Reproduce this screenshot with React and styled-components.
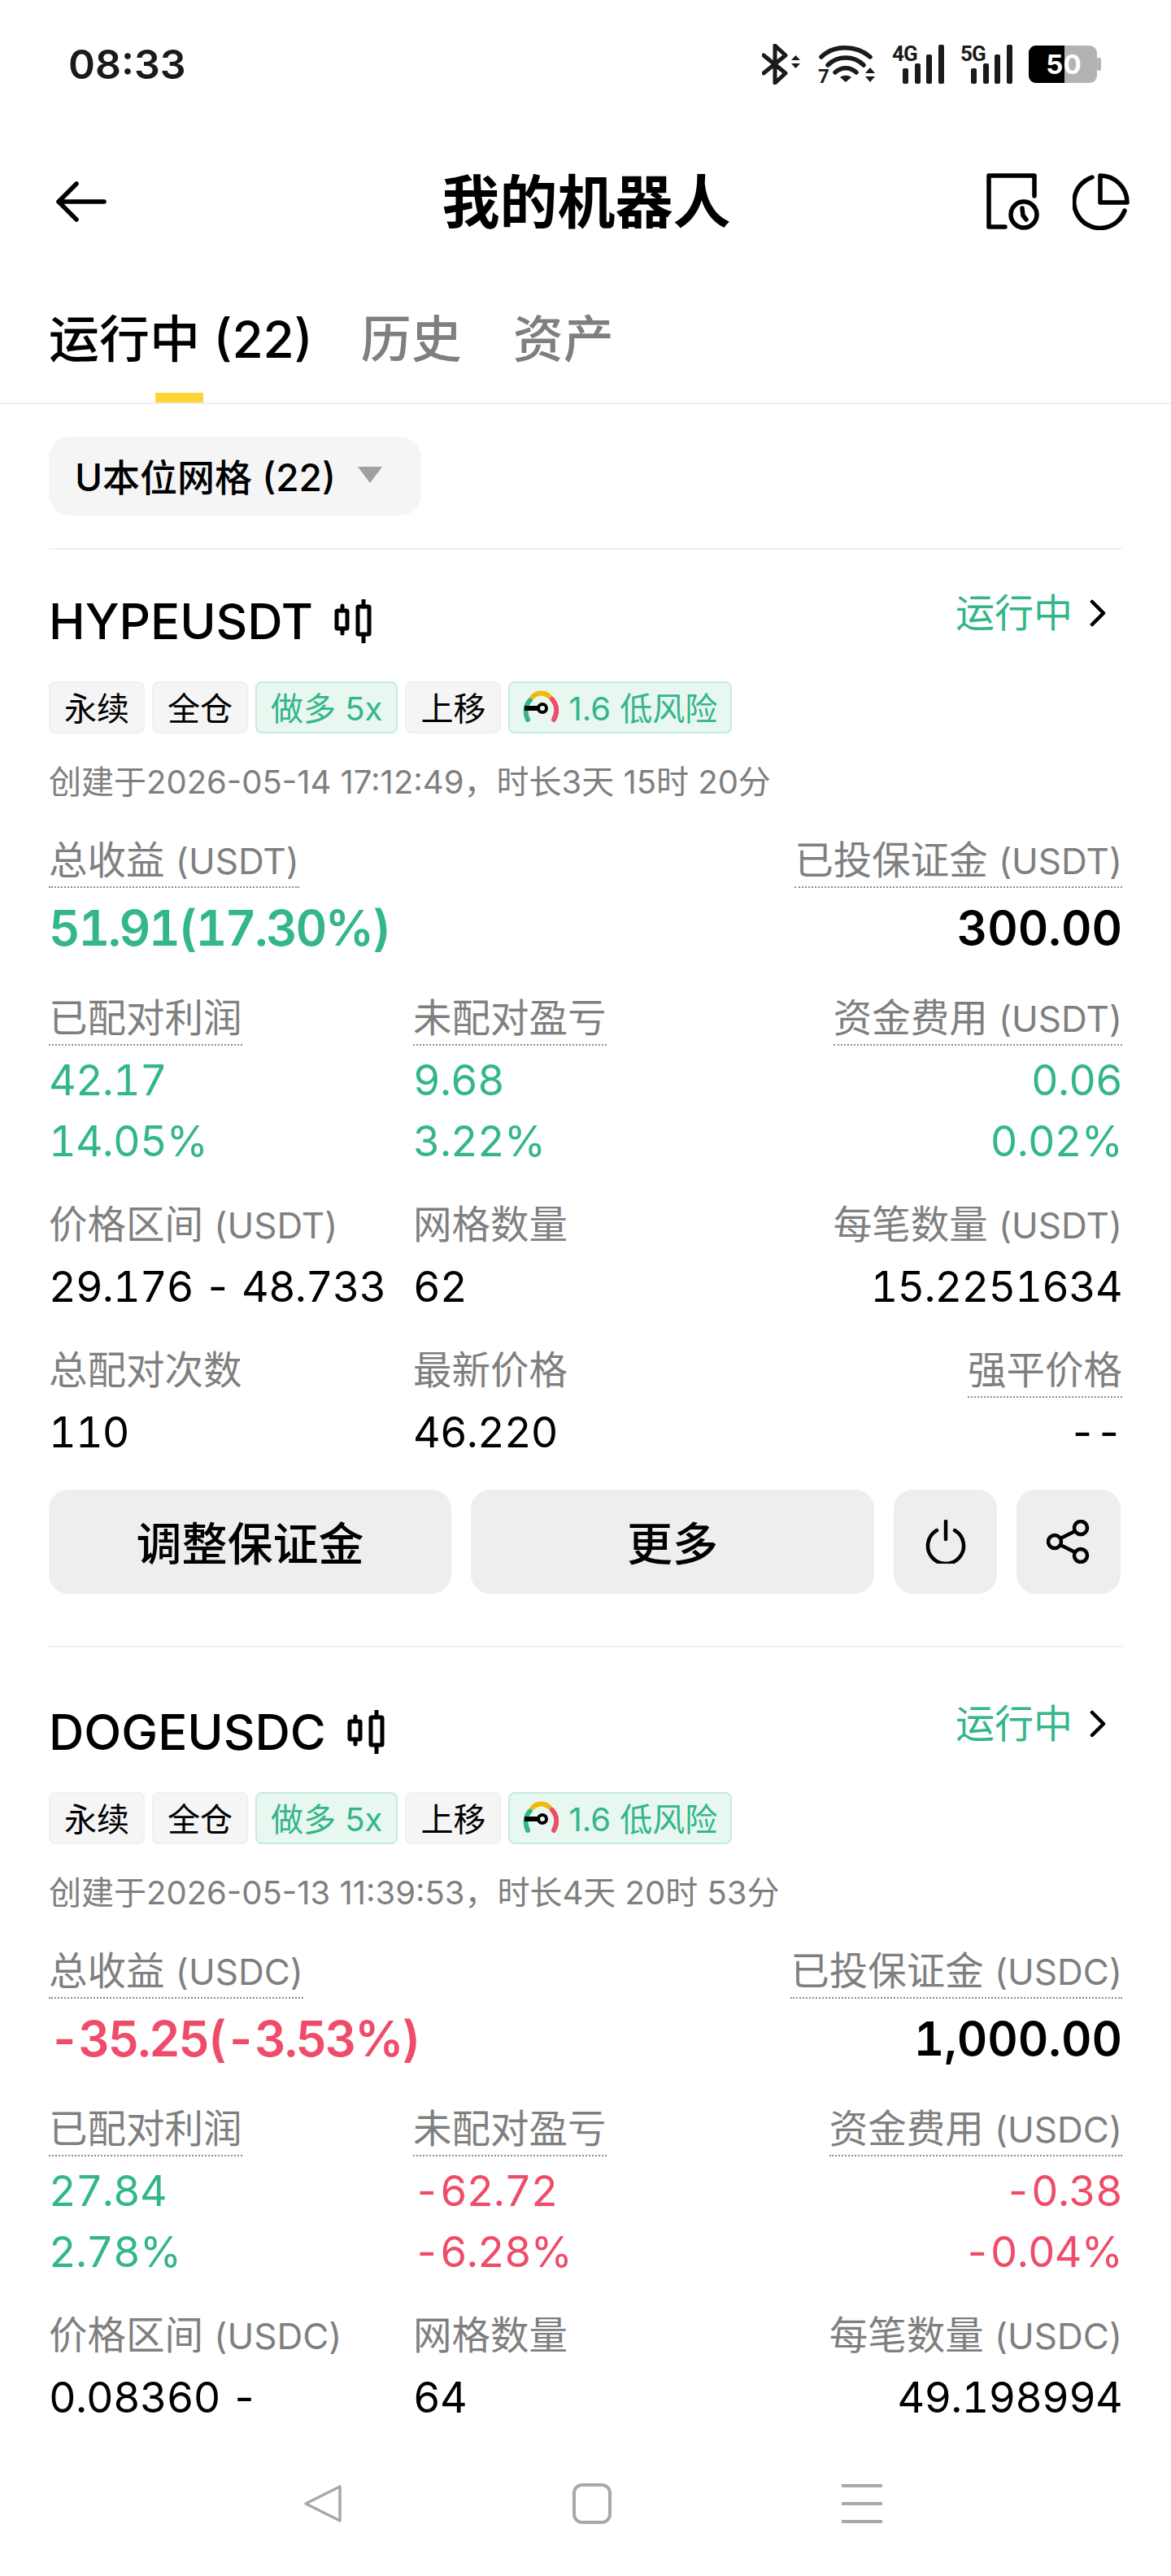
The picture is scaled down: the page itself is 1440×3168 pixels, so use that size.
import React from 'react';
import styled, { createGlobalStyle } from 'styled-components';

const GREEN = '#33b68a';
const RED = '#ee4c68';
const GRAY = '#7f7f7f';

const GlobalStyle = createGlobalStyle`
    html, body {
        margin: 0;
        padding: 0;
        background: #fff;
    }
    * {
        box-sizing: border-box;
    }
`;

const Page = styled.div`
    width: 1440px;
    height: 3168px;
    display: flex;
    flex-direction: column;
    overflow: hidden;
    background: #fff;
    color: #000;
    font-family: Inter, "Noto Sans CJK SC", sans-serif;
`;

const Content = styled.div`
    flex: 1;
    min-height: 0;
    overflow: hidden;
`;

const StatusBar = styled.div`
    height: 160px;
    padding: 54px 85px 0 84px;
    display: flex;
    justify-content: space-between;
    align-items: flex-start;
`;

const Time = styled.div`
    font-size: 50px;
    line-height: 50px;
    font-weight: 600;
    color: #1a1a1a;
`;

const StatusIcons = styled.div`
    display: flex;
    align-items: center;
    gap: 20px;
    height: 50px;
`;

const Header = styled.div`
    height: 176px;
    padding: 0 51px 0 53px;
    display: grid;
    grid-template-columns: 1fr auto 1fr;
    align-items: center;
`;

const BackSlot = styled.div`
    padding-left: 15px;
    display: flex;
`;

const Title = styled.h1`
    margin: 0;
    font-size: 71px;
    line-height: 80px;
    font-weight: 700;
`;

const HeaderActions = styled.div`
    display: flex;
    justify-content: flex-end;
    align-items: center;
    gap: 40px;
`;

const Tabs = styled.div`
    height: 161px;
    padding: 0 60px;
    display: flex;
    gap: 63px;
    border-bottom: 2px solid #f0f0f0;
`;

const Tab = styled.div`
    position: relative;
    padding-top: 46px;
    margin-right: ${props => (props.$active ? '-4px' : '0')};
    font-size: 62px;
    line-height: 72px;
    font-weight: 500;
    white-space: nowrap;
    color: ${props => (props.$active ? '#000' : GRAY)};

    &::after {
        content: '';
        display: ${props => (props.$active ? 'block' : 'none')};
        position: absolute;
        left: 131px;
        bottom: 0;
        width: 59px;
        height: 12px;
        background: #fcd535;
    }
`;

const FilterSection = styled.div`
    margin: 0 60px;
    padding: 40px 0;
    border-bottom: 2px solid #f0f0f0;
`;

const Filter = styled.div`
    width: 458px;
    height: 97px;
    padding: 0 32px 4px;
    display: flex;
    align-items: center;
    justify-content: space-between;
    background: #f5f5f5;
    border-radius: 26px;
    font-size: 46px;
    font-weight: 500;
    white-space: nowrap;
`;

const Caret = styled.span`
    width: 0;
    height: 0;
    margin-right: 16px;
    border-left: 15px solid transparent;
    border-right: 15px solid transparent;
    border-top: 20px solid #a0a0a0;
`;

const Card = styled.section`
    margin: 0 60px;
    padding: ${props => (props.$first ? '53px' : '69px')} 0 64px;
    border-bottom: 2px solid #f0f0f0;
`;

const CardHead = styled.div`
    display: flex;
    justify-content: space-between;
    align-items: flex-start;
    height: 70px;
`;

const Symbol = styled.div`
    display: flex;
    align-items: center;
    gap: 26px;
    font-size: 60px;
    line-height: 70px;
    font-weight: 500;
`;

const RunState = styled.div`
    display: flex;
    align-items: center;
    gap: 21px;
    margin-top: -10px;
    padding-right: 20px;
    font-size: 48px;
    line-height: 70px;
    color: ${GREEN};
`;

const TagRow = styled.div`
    margin-top: 39px;
    display: flex;
    gap: 9px;
`;

const Tag = styled.div`
    height: 64px;
    padding: 0 ${props => (props.$gauge ? '16px' : '17px')} 2px;
    display: flex;
    align-items: center;
    gap: 12px;
    border-radius: 8px;
    font-size: 40px;
    white-space: nowrap;
    background: ${props => (props.$green ? '#e8f8f1' : '#f5f5f5')};
    border: 2px solid ${props => (props.$green ? '#c4ecdc' : '#f0f0f0')};
    color: ${props => (props.$green ? GREEN : '#000')};
`;

const Created = styled.div`
    margin-top: 35px;
    font-size: 40px;
    line-height: 50px;
    color: ${GRAY};
    white-space: nowrap;
`;

const Summary = styled.div`
    margin-top: 43px;
    display: flex;
    justify-content: space-between;
`;

const Stats = styled.div`
    margin-top: 49px;
    display: grid;
    grid-template-columns: 448px 1fr auto;
    row-gap: 44px;
`;

const Metric = styled.div`
    display: flex;
    flex-direction: column;
    align-items: ${props => (props.$right ? 'flex-end' : 'flex-start')};
    text-align: ${props => (props.$right ? 'right' : 'left')};
`;

const Label = styled.span`
    height: ${props => (props.$dotted ? '62px' : '56px')};
    margin-bottom: ${props => (props.$dotted ? '-6px' : '0')};
    font-size: 47.5px;
    line-height: 56px;
    color: ${GRAY};
    white-space: nowrap;
    border-bottom: ${props => (props.$dotted ? `2px dotted #8c8c8c` : 'none')};
`;

const Quote = styled.span`
    font-size: 44px;
`;

const BigValue = styled.div`
    margin-top: 21px;
    font-size: ${props => props.$size}px;
    line-height: 68px;
    font-weight: 600;
    font-variant-numeric: tabular-nums;
    letter-spacing: ${props => props.$spacing || 0}px;
    white-space: nowrap;
    color: ${props => props.$color || '#000'};
`;

const Value = styled.div`
    margin-top: 15px;
    font-size: 52px;
    line-height: 60px;
    font-variant-numeric: tabular-nums;
    letter-spacing: -0.8px;
    white-space: nowrap;
    color: ${props => props.$color || '#000'};

    ${Label} + & {
        margin-top: 19px;
    }
`;

const Actions = styled.div`
    margin-top: 40px;
    display: grid;
    grid-template-columns: 495px 496px 127px 128px;
    gap: 24px;
`;

const ActionButton = styled.button`
    height: 128px;
    padding: 0 0 ${props => (props.$text ? '4px' : '0')};
    border: none;
    border-radius: 24px;
    background: #eeeeee;
    color: #000;
    display: flex;
    align-items: center;
    justify-content: center;
    font-family: inherit;
    font-size: 56px;
    font-weight: 500;
`;

const BottomNav = styled.div`
    height: 178px;
    flex-shrink: 0;
    padding-left: 18px;
    display: flex;
    align-items: center;
    justify-content: center;
    gap: 283px;
    background: #fff;
`;

const BluetoothIcon = () => (
    <svg width="48" height="50" viewBox="0 0 48 50" fill="none">
        <path d="M2 14l27 22-13 12V2l13 12L2 36" stroke="#1a1a1a" strokeWidth="5" strokeLinecap="round" strokeLinejoin="round" />
        <path d="M36 20l5.500-6 5.500 6zM36 24h11l-5.500 6z" fill="#1a1a1a" />
    </svg>
);

// taller than the row (centred in it) so the small labels keep their whole line box
const WifiIcon = () => (
    <svg width="72" height="70" viewBox="0 -10 72 70" fill="none">
        <path d="M5 16C20 1 48 1 65 16M13 26C25 14 45 14 57 26M22 35c8-7 18-7 26 0" stroke="#1a1a1a" strokeWidth="5.500" strokeLinecap="round" />
        <path d="M28 41c4-3 10-3 14 0l-7 6z" fill="#1a1a1a" />
        <text x="1" y="48" fontFamily="Roboto, sans-serif" fontSize="24" fontWeight="700" fill="#1a1a1a">7</text>
        <path d="M59 36l6-7 6 7zM59 40h12l-6 7z" fill="#1a1a1a" />
    </svg>
);

const SignalIcon = ({ label }) => (
    <svg width="64" height="70" viewBox="0 -10 64 70">
        <text x="0" y="21" fontFamily="Roboto, sans-serif" fontSize="26" fontWeight="700" letterSpacing="-1" fill="#1a1a1a">{label}</text>
        <rect x="13" y="30" width="7" height="19" rx="2" fill="#1a1a1a" />
        <rect x="28" y="24" width="7" height="25" rx="2" fill="#1a1a1a" />
        <rect x="42" y="13" width="7" height="36" rx="2" fill="#1a1a1a" />
        <rect x="57" y="1" width="7" height="48" rx="2" fill="#1a1a1a" />
    </svg>
);

const BatteryIcon = () => (
    <svg width="90" height="46" viewBox="0 0 90 46">
        <rect x="0" y="0" width="84" height="46" rx="9" fill="#b3b3b3" />
        <rect x="84" y="15" width="5" height="16" rx="2" fill="#b3b3b3" />
        <path d="M9 0h35v46H9a9 9 0 0 1-9-9V9a9 9 0 0 1 9-9z" fill="#000" />
        <text x="43" y="35" textAnchor="middle" fontFamily="Inter, sans-serif" fontSize="33" fontWeight="700" fill="#fff">50</text>
    </svg>
);

const BackIcon = () => (
    <svg width="64" height="50" viewBox="0 0 64 50" fill="none">
        <path d="M26 3L4 25l22 22M4 25h56" stroke="#000" strokeWidth="5.500" strokeLinecap="round" strokeLinejoin="round" />
    </svg>
);

const HistoryIcon = () => (
    <svg width="66" height="70" viewBox="0 0 66 70" fill="none" stroke="#000" strokeWidth="5.500" strokeLinecap="round" strokeLinejoin="round">
        <path d="M23 66H3V3h56v25" />
        <circle cx="46" cy="51" r="16" />
        <path d="M44 43l1 9 4 5" />
    </svg>
);

const PieIcon = () => (
    <svg width="70" height="70" viewBox="0 0 70 70" fill="none" stroke="#000" strokeWidth="5.500" strokeLinecap="round" strokeLinejoin="round">
        <path d="M24 5a32 32 0 1 0 40 41" />
        <path d="M34 3a33 33 0 0 1 33 33H34z" />
    </svg>
);

const CandleIcon = () => (
    <svg width="50" height="54" viewBox="0 0 50 54" fill="none" stroke="#000" strokeWidth="5" strokeLinecap="round">
        <path d="M10 8v6M10 36v6M36 1v8M36 43v10" />
        <rect x="3" y="14" width="13" height="22" rx="1" />
        <rect x="29" y="9" width="14" height="34" rx="1" />
    </svg>
);

const ChevronIcon = () => (
    <svg width="20" height="34" viewBox="0 0 20 34" fill="none">
        <path d="M3 3l14 14L3 31" stroke="#000" strokeWidth="4.500" strokeLinecap="round" strokeLinejoin="round" />
    </svg>
);

const GaugeIcon = () => (
    <svg width="44" height="42" viewBox="0 0 44 42" fill="none" strokeWidth="6" strokeLinecap="round">
        <path d="M6 37C2 28 3 19 9 13" stroke="#33b68a" />
        <path d="M12 9C18 3 27 3 33 9" stroke="#f0b90b" />
        <path d="M36 12C42 19 43 28 38 37" stroke="#ee4c68" />
        <circle cx="24" cy="23" r="5" stroke="#000" strokeWidth="4" />
        <path d="M2 23h17" stroke="#000" strokeWidth="6" strokeLinecap="butt" />
    </svg>
);

const PowerIcon = () => (
    <svg width="50" height="54" viewBox="0 0 50 54" fill="none">
        <path d="M14 13a22 22 0 1 0 22 0M25 2v22" stroke="#000" strokeWidth="4.500" strokeLinecap="round" />
    </svg>
);

const ShareIcon = () => (
    <svg width="54" height="54" viewBox="0 0 54 54" fill="none" stroke="#000" strokeWidth="4.500">
        <circle cx="42" cy="10" r="8" />
        <circle cx="10" cy="27" r="8" />
        <circle cx="42" cy="44" r="8" />
        <path d="M17 23l18-9M17 31l18 9" />
    </svg>
);

const NavBack = () => (
    <svg width="48" height="50" viewBox="0 0 48 50" fill="none">
        <path d="M45 4L3 25l42 21z" stroke="#a8a8a8" strokeWidth="3.500" strokeLinejoin="round" />
    </svg>
);

const NavHome = () => (
    <svg width="48" height="50" viewBox="0 0 48 50" fill="none">
        <rect x="2" y="2" width="44" height="46" rx="10" stroke="#a8a8a8" strokeWidth="4" />
    </svg>
);

const NavMenu = () => (
    <svg width="50" height="50" viewBox="0 0 50 50" fill="#a8a8a8">
        <rect x="0" y="1" width="50" height="4" />
        <rect x="0" y="23" width="50" height="4" />
        <rect x="0" y="45" width="50" height="4" />
    </svg>
);

const bots = [
    {
        symbol: 'HYPEUSDT',
        quote: 'USDT',
        created: '创建于2026-05-14 17:12:49，时长3天 15时 20分',
        profit: '51.91(17.30%)',
        profitColor: GREEN,
        margin: '300.00',
        paired: ['42.17', '14.05%'],
        pairedColor: GREEN,
        unpaired: ['9.68', '3.22%'],
        unpairedColor: GREEN,
        funding: ['0.06', '0.02%'],
        fundingColor: GREEN,
        range: '29.176 - 48.733',
        grids: '62',
        perOrder: '15.2251634',
        trades: '110',
        last: '46.220',
        liquidation: '--',
    },
    {
        symbol: 'DOGEUSDC',
        quote: 'USDC',
        created: '创建于2026-05-13 11:39:53，时长4天 20时 53分',
        profit: '-35.25(-3.53%)',
        profitColor: RED,
        margin: '1,000.00',
        paired: ['27.84', '2.78%'],
        pairedColor: GREEN,
        unpaired: ['-62.72', '-6.28%'],
        unpairedColor: RED,
        funding: ['-0.38', '-0.04%'],
        fundingColor: RED,
        range: '0.08360 -',
        grids: '64',
        perOrder: '49.198994',
    },
];

const BotCard = ({ bot, first }) => (
    <Card $first={first}>
        <CardHead>
            <Symbol>
                {bot.symbol}
                <CandleIcon />
            </Symbol>
            <RunState>
                运行中
                <ChevronIcon />
            </RunState>
        </CardHead>

        <TagRow>
            <Tag>永续</Tag>
            <Tag>全仓</Tag>
            <Tag $green>做多 5x</Tag>
            <Tag>上移</Tag>
            <Tag $green $gauge>
                <GaugeIcon />
                1.6 低风险
            </Tag>
        </TagRow>

        <Created>{bot.created}</Created>

        <Summary>
            <Metric>
                <Label $dotted>总收益 <Quote>({bot.quote})</Quote></Label>
                <BigValue $size={60} $spacing={-2.4} $color={bot.profitColor}>{bot.profit}</BigValue>
            </Metric>
            <Metric $right>
                <Label $dotted>已投保证金 <Quote>({bot.quote})</Quote></Label>
                <BigValue $size={58}>{bot.margin}</BigValue>
            </Metric>
        </Summary>

        <Stats>
            <Metric>
                <Label $dotted>已配对利润</Label>
                {bot.paired.map(v => <Value key={v} $color={bot.pairedColor}>{v}</Value>)}
            </Metric>
            <Metric>
                <Label $dotted>未配对盈亏</Label>
                {bot.unpaired.map(v => <Value key={v} $color={bot.unpairedColor}>{v}</Value>)}
            </Metric>
            <Metric $right>
                <Label $dotted>资金费用 <Quote>({bot.quote})</Quote></Label>
                {bot.funding.map(v => <Value key={v} $color={bot.fundingColor}>{v}</Value>)}
            </Metric>

            <Metric>
                <Label>价格区间 <Quote>({bot.quote})</Quote></Label>
                <Value>{bot.range}</Value>
            </Metric>
            <Metric>
                <Label>网格数量</Label>
                <Value>{bot.grids}</Value>
            </Metric>
            <Metric $right>
                <Label>每笔数量 <Quote>({bot.quote})</Quote></Label>
                <Value>{bot.perOrder}</Value>
            </Metric>

            {bot.trades && (
                <>
                    <Metric>
                        <Label>总配对次数</Label>
                        <Value>{bot.trades}</Value>
                    </Metric>
                    <Metric>
                        <Label>最新价格</Label>
                        <Value>{bot.last}</Value>
                    </Metric>
                    <Metric $right>
                        <Label $dotted>强平价格</Label>
                        <Value>{bot.liquidation}</Value>
                    </Metric>
                </>
            )}
        </Stats>

        {bot.trades && (
            <Actions>
                <ActionButton $text>调整保证金</ActionButton>
                <ActionButton $text>更多</ActionButton>
                <ActionButton><PowerIcon /></ActionButton>
                <ActionButton><ShareIcon /></ActionButton>
            </Actions>
        )}
    </Card>
);

export default function App() {
    return (
        <Page>
            <GlobalStyle />
            <Content>
                <StatusBar>
                    <Time>08:33</Time>
                    <StatusIcons>
                        <BluetoothIcon />
                        <WifiIcon />
                        <SignalIcon label="4G" />
                        <SignalIcon label="5G" />
                        <BatteryIcon />
                    </StatusIcons>
                </StatusBar>

                <Header>
                    <BackSlot><BackIcon /></BackSlot>
                    <Title>我的机器人</Title>
                    <HeaderActions>
                        <HistoryIcon />
                        <PieIcon />
                    </HeaderActions>
                </Header>

                <Tabs>
                    <Tab $active>运行中 (22)</Tab>
                    <Tab>历史</Tab>
                    <Tab>资产</Tab>
                </Tabs>

                <FilterSection>
                    <Filter>
                        U本位网格 (22)
                        <Caret />
                    </Filter>
                </FilterSection>

                {bots.map((bot, i) => <BotCard key={bot.symbol} bot={bot} first={i === 0} />)}
            </Content>

            <BottomNav>
                <NavBack />
                <NavHome />
                <NavMenu />
            </BottomNav>
        </Page>
    );
}
